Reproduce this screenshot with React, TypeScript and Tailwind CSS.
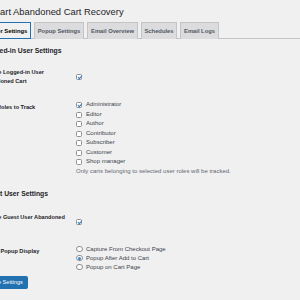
import React from "react";

const Checkbox = ({ checked = false }: { checked?: boolean }) => (
  <div className="relative w-[6px] h-[6px] shrink-0 bg-white border border-[#8c8f94] rounded-[1.5px]">
    {checked && (
      <svg viewBox="0 0 20 20" className="absolute left-[-2px] top-[-2px] w-[9px] h-[9px]">
        <path d="M14.83 4.89l1.34.94-5.81 8.38H9.02L5.78 9.67l1.34-1.25 2.57 2.4z" fill="#3582c4" />
      </svg>
    )}
  </div>
);

const Radio = ({ checked = false }: { checked?: boolean }) => (
  <div className="w-[6.5px] h-[6.5px] shrink-0 bg-white border border-[#8c8f94] rounded-full flex items-center justify-center">
    {checked && <div className="w-[3px] h-[3px] rounded-full bg-[#3582c4]" />}
  </div>
);

const tabs = [
  { label: "User Settings", w: "w-[45px]", active: true },
  { label: "Popup Settings", w: "w-[50px]" },
  { label: "Email Overview", w: "w-[51px]" },
  { label: "Schedules", w: "w-[36px]" },
  { label: "Email Logs", w: "w-[39px]" },
];

const roles = ["Administrator", "Editor", "Author", "Contributor", "Subscriber", "Customer", "Shop manager"];

export default function App() {
  return (
    <div className="w-[300px] h-[300px] overflow-hidden bg-[#f0f0f1] font-['Liberation_Sans',Arial,sans-serif] text-[#1d2327]">
      <div className="ml-[-17px] w-[340px]">
        <h1 className="pt-[6px] pl-[3px] text-[9.4px] leading-[12px] font-normal text-[#1d2327] whitespace-nowrap">
          Smart Abandoned Cart Recovery
        </h1>
        <div className="mt-[4px] flex border-b border-[#c3c4c7] h-[17px]">
          {tabs.map((t) => (
            <div
              key={t.label}
              className={
                t.w +
                " ml-[3px] h-[17px] flex items-center justify-center whitespace-nowrap text-[5.8px] font-bold border border-b-0 " +
                (t.active
                  ? "bg-[#f0f0f1] text-black border-[#2271b1] outline outline-1 outline-[#2271b1] -outline-offset-1 h-[16px] relative z-10 mb-[-1px]"
                  : "bg-[#dcdcde] text-[#50575e] border-[#c3c4c7] h-[16px]")
              }
            >
              {t.label}
            </div>
          ))}
        </div>
        <h2 className="mt-[7px] h-[9px] text-[6.8px] leading-[9px] font-bold whitespace-nowrap">Logged-in User Settings</h2>

        <div className="flex h-[41px]">
          <div className="w-[93px] shrink-0 pt-[12.5px] pr-[6px] text-[5.6px] leading-[9px] font-bold">
            Enable Logged-in User Abandoned Cart
          </div>
          <div className="pt-[19px]">
            <Checkbox checked />
          </div>
        </div>

        <div className="flex h-[81px]">
          <div className="w-[93px] shrink-0 pt-[6.5px] text-[5.6px] leading-[9px] font-bold whitespace-nowrap">
            User Roles to Track
          </div>
          <div className="pt-[4.25px] text-[6px] leading-[9.5px]">
            {roles.map((r, i) => (
              <div key={r} className="flex items-center gap-[4px] h-[9.5px] text-[#3c434a] whitespace-nowrap">
                <Checkbox checked={i === 0} />
                <span>{r}</span>
              </div>
            ))}
            <div className="mt-[0.5px] text-[#646970] whitespace-nowrap">
              Only carts belonging to selected user roles will be tracked.
            </div>
          </div>
        </div>

        <h2 className="mt-[11.5px] h-[9px] text-[6.8px] leading-[9px] font-bold whitespace-nowrap">Guest User Settings</h2>

        <div className="flex h-[40px]">
          <div className="w-[93px] shrink-0 pt-[15px] text-[5.6px] leading-[9px] font-bold whitespace-nowrap">
            Enable Guest User Abandoned
          </div>
          <div className="pt-[21.5px]">
            <Checkbox checked />
          </div>
        </div>

        <div className="flex h-[38.5px]">
          <div className="w-[93px] shrink-0 pt-[9px] text-[5.6px] leading-[9px] font-bold whitespace-nowrap">
            Guest Popup Display
          </div>
          <div className="pt-[7px] text-[6px] leading-[9px]">
            {["Capture From Checkout Page", "Popup After Add to Cart", "Popup on Cart Page"].map((r, i) => (
              <div key={r} className="flex items-center gap-[3.5px] h-[9px] text-[#3c434a] whitespace-nowrap">
                <Radio checked={i === 1} />
                <span>{r}</span>
              </div>
            ))}
          </div>
        </div>

        <div className="flex">
          <div className="h-[13px] px-[4.3px] flex items-center bg-[#2271b1] border border-[#2271b1] rounded-[1.5px] text-white text-[5.6px] whitespace-nowrap">
            Save Settings
          </div>
        </div>
      </div>
    </div>
  );
}
